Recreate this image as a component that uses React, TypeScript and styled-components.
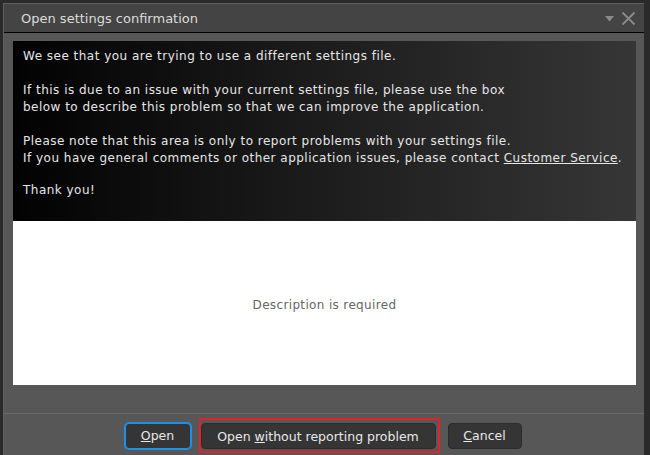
import React from 'react';
import styled, { createGlobalStyle } from 'styled-components';

const GlobalStyle = createGlobalStyle`
  html, body {
    margin: 0;
    padding: 0;
    background: #2a2a2a;
    overflow: hidden;
  }
  body {
    font-family: "DejaVu Sans", Verdana, sans-serif;
  }
`;

const App = () => {
  return (
    <>
      <GlobalStyle />
      <Screen>
        <Window>
          <TitleBar>
            <Title>Open settings confirmation</Title>
            <TitleIcons>
              <svg width="9" height="6" viewBox="0 0 9 6">
                <path d="M0 0 H9 L4.5 5.5 Z" fill="#8a8a8a" />
              </svg>
              <svg width="15" height="15" viewBox="0 0 15 15">
                <path d="M1.5 1.5 L13.5 13.5 M13.5 1.5 L1.5 13.5" stroke="#8a8a8a" strokeWidth="1.8" />
              </svg>
            </TitleIcons>
          </TitleBar>
          <Body>
            <Message>
              <p>We see that you are trying to use a different settings file.</p>
              <p>
                If this is due to an issue with your current settings file, please use the box
                <br />
                below to describe this problem so that we can improve the application.
              </p>
              <p>
                Please note that this area is only to report problems with your settings file.
                <br />
                If you have general comments or other application issues, please contact{' '}
                <Link>Customer Service</Link>.
              </p>
              <p>Thank you!</p>
            </Message>
            <Description placeholder="Description is required" />
          </Body>
          <Footer>
            <Button primary>
              <u>O</u>pen
            </Button>
            <Highlight>
              <Button wide>
                Open <u>w</u>ithout reporting problem
              </Button>
            </Highlight>
            <Button>
              <u>C</u>ancel
            </Button>
          </Footer>
        </Window>
      </Screen>
    </>
  );
};

const Screen = styled.div`
  width: 650px;
  height: 455px;
  padding: 3px 0 0 3px;
  box-sizing: border-box;
`;

const Window = styled.div`
  width: 641px;
  height: 460px;
  background: #575757;
  border-left: 1px solid #5f5f5f;
  border-top: 1px solid #5f5f5f;
  box-sizing: border-box;
  display: flex;
  flex-direction: column;
`;

const TitleBar = styled.div`
  height: 28px;
  background: #444444;
  border-bottom: 1px solid #000;
  display: flex;
  align-items: center;
  justify-content: space-between;
  padding: 0 8px 0 17px;
  flex-shrink: 0;
`;

const Title = styled.span`
  color: #dcdcdc;
  font-size: 13px;
`;

const TitleIcons = styled.div`
  display: flex;
  align-items: center;
  gap: 7px;
  padding-top: 1px;
`;

const Body = styled.div`
  padding: 8px 8px 0 9px;
  display: flex;
  flex-direction: column;
`;

const Message = styled.div`
  height: 180px;
  box-sizing: border-box;
  padding: 7px 10px 6px;
  background: linear-gradient(to right, #020202 0%, #1a1a1a 45%, #363636 100%);
  color: #e6e6e6;
  font-size: 12px;
  letter-spacing: 0.48px;
  line-height: 17px;

  p {
    margin: 0 0 17px;
  }

  p:nth-child(3) {
    margin-bottom: 15px;
  }
`;

const Link = styled.span`
  text-decoration: underline;
`;

const Description = styled.textarea`
  height: 164px;
  border: none;
  background: #fff;
  resize: none;
  outline: none;
  margin: 0;
  padding: 0;
  box-sizing: border-box;
  font-family: "DejaVu Sans", Verdana, sans-serif;
  font-size: 12px;
  letter-spacing: 0.35px;
  text-align: center;
  padding-top: 77px;

  &::placeholder {
    color: #666;
  }
`;

const Footer = styled.div`
  margin-top: 28px;
  border-top: 1px solid #6a6a6a;
  display: flex;
  justify-content: center;
  align-items: center;
  gap: 8px;
  padding-top: 4px;
  padding-right: 2px;
`;

const Highlight = styled.div`
  border: 2px solid #e3202b;
  padding: 3px 2px 2px 0;
  display: flex;
`;

const Button = styled.button<{ primary?: boolean; wide?: boolean }>`
  height: 26px;
  min-width: ${(p) => (p.wide ? '235px' : p.primary ? '66px' : '74px')};
  padding: 0 14px;
  background: #353535;
  color: #e8e8e8;
  border: 1px solid ${(p) => (p.primary ? '#1e90e6' : '#2c2c2c')};
  box-shadow: ${(p) => (p.primary ? '0 0 0 1px #1e90e6' : 'none')};
  border-radius: 4px;
  font-family: "DejaVu Sans", Verdana, sans-serif;
  font-size: 12.5px;
  cursor: pointer;
  box-sizing: border-box;
`;

export default App;
